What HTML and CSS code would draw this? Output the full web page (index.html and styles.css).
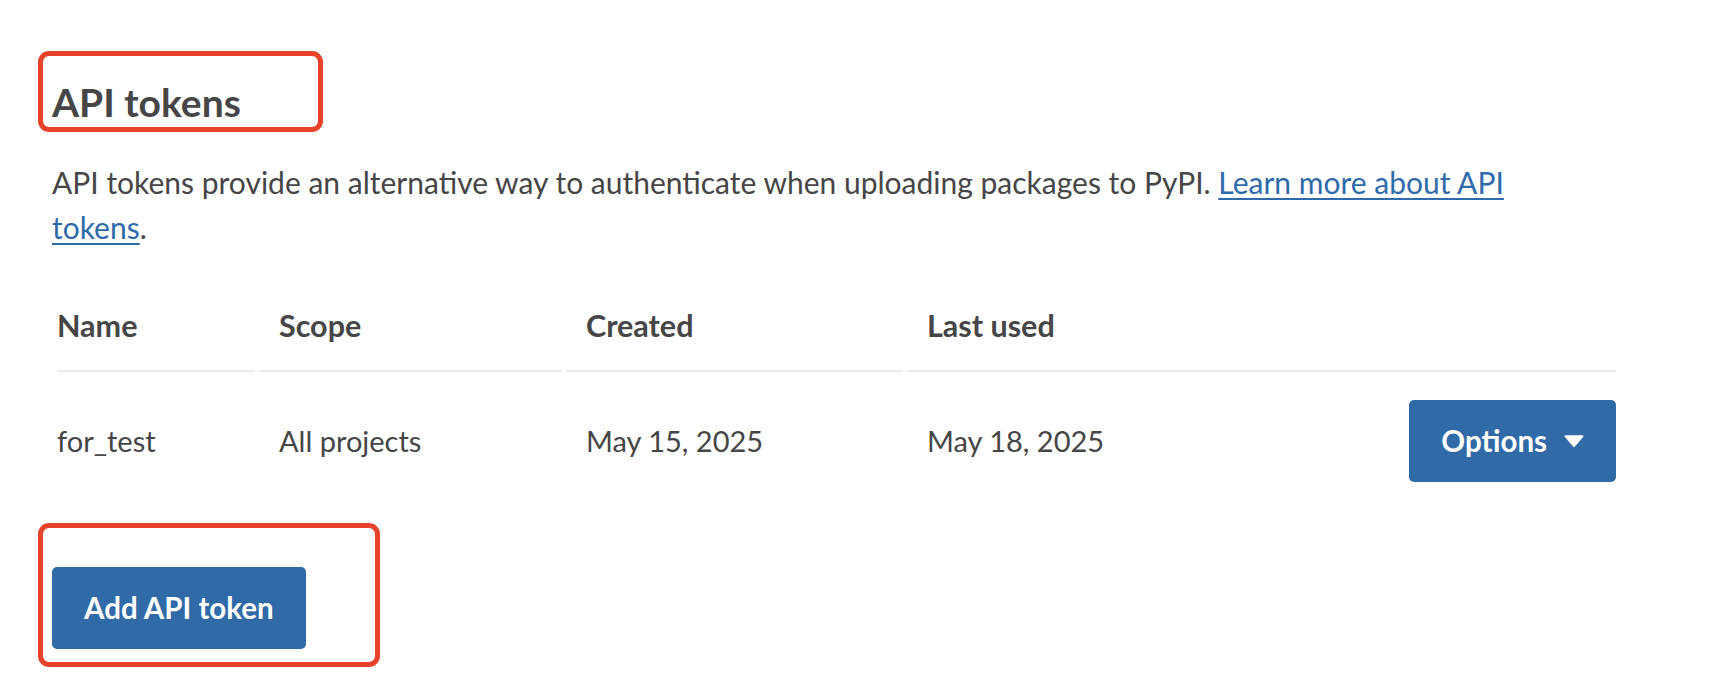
FILE: index.html
```html
<!DOCTYPE html>
<html lang="en">
<head>
<meta charset="utf-8">
<title>API tokens</title>
<link rel="stylesheet" href="styles.css">
</head>
<body>
<main class="page">
  <section class="tokens">
    <h2 class="title">API tokens</h2>
    <p class="intro">API tokens provide an alternative way to authenticate when uploading packages to PyPI. <a class="link" href="#">Learn more about API tokens</a>.</p>
    <table class="table">
      <colgroup>
        <col class="w-name"><col class="w-scope"><col class="w-created"><col class="w-used"><col class="w-actions">
      </colgroup>
      <thead>
        <tr><th>Name</th><th>Scope</th><th>Created</th><th colspan="2">Last used</th></tr>
      </thead>
      <tbody>
        <tr>
          <td>for_test</td>
          <td>All projects</td>
          <td>May 15, 2025</td>
          <td>May 18, 2025</td>
          <td class="actions"><button class="btn btn-options" type="button">Options<svg class="caret" viewBox="0 0 20 12" width="20" height="12" aria-hidden="true"><path d="M1.5 1.2 H18.5 L10 11 Z" fill="#fff" stroke="#fff" stroke-width="2" stroke-linejoin="round"/></svg></button></td>
        </tr>
      </tbody>
    </table>
    <button class="btn btn-add" type="button">Add API token</button>
  </section>
  <div class="mark mark-title"></div>
  <div class="mark mark-add"></div>
</main>
</body>
</html>
```
FILE: styles.css
```css
* { box-sizing: border-box; }
body {
  margin: 0;
  background: #ffffff;
  color: #464646;
  font-family: Lato, "Noto Sans", sans-serif;
}
.page {
  position: relative;
  width: 1730px;
  height: 676px;
  padding: 77px 0 0 52px;
  overflow: hidden;
}
.tokens { width: 1568px; }
.title {
  margin: 0;
  font-size: 39px;
  line-height: 50px;
  font-weight: 700;
}
.intro {
  margin: 33px 0 0;
  width: 1540px;
  font-size: 30px;
  line-height: 45px;
}
.link {
  color: #2f6aab;
  text-decoration: underline;
  text-decoration-thickness: 2px;
  text-underline-offset: 4px;
}
.table {
  margin: 33px 0 0 1px;
  width: 1567px;
  table-layout: fixed;
  border-collapse: separate;
  border-spacing: 4px 0;
}
.w-name { width: 198px; }
.w-scope { width: 303px; }
.w-created { width: 337px; }
.w-used { width: 476px; }
.w-actions { width: 229px; }
.table th {
  text-align: left;
  font-size: 30.5px;
  line-height: 44px;
  font-weight: 700;
  padding: 20px 20px 23px;
  border-bottom: 2px solid #ebebeb;
}
.table td {
  font-size: 29px;
  line-height: 44px;
  padding: 28px 20px;
  vertical-align: middle;
}
.table th:first-child, .table td:first-child { padding-left: 0; }
.table td.actions { padding-right: 0; }
.btn {
  display: inline-flex;
  align-items: center;
  height: 82px;
  padding: 0 32px;
  border: 0;
  border-radius: 5px;
  background: #306aa7;
  color: #ffffff;
  font-family: Lato, "Noto Sans", sans-serif;
  font-size: 29.5px;
  font-weight: 700;
  line-height: 44px;
}
.btn-options { display: flex; margin-left: auto; }
.caret { margin-left: 17px; }
.btn-add { margin-top: 57px; }
.mark {
  position: absolute;
  border: 5px solid #e8422a;
  border-radius: 11px;
}
.mark-title { left: 38px; top: 51px; width: 285px; height: 81px; }
.mark-add { left: 38px; top: 523px; width: 342px; height: 144px; }
```
